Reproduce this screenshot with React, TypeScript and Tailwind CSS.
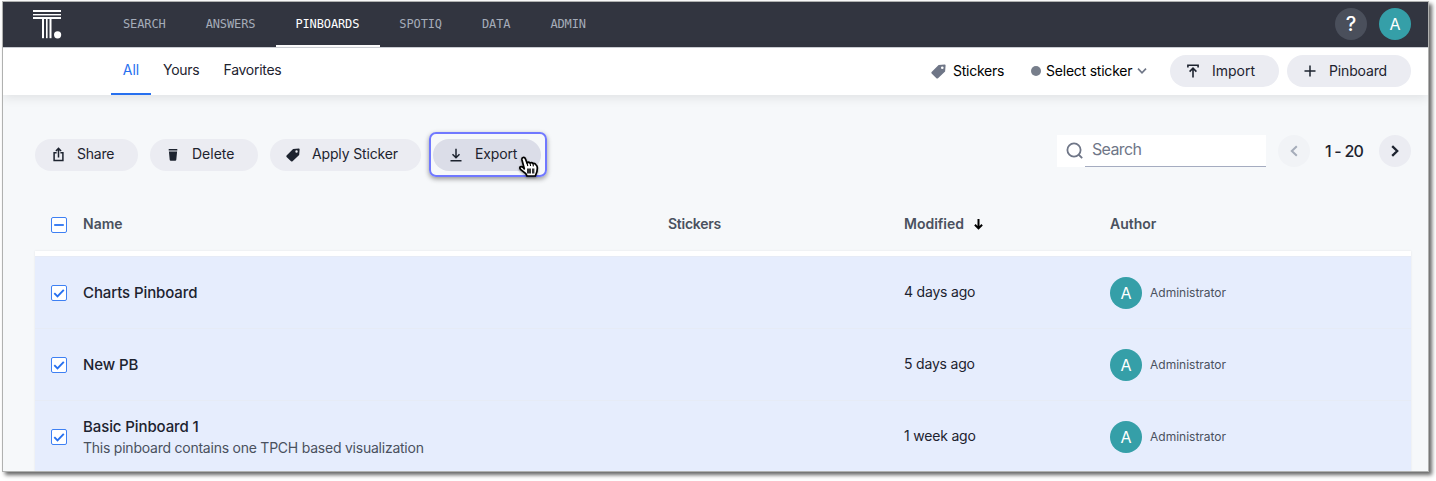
import React from "react";

type IconProps = { className?: string };

const Logo = () => (
  <svg width="29" height="30" viewBox="0 0 29 30" className="block" fill="#fff">
    <rect x="0" y="0" width="28" height="2" />
    <rect x="0" y="4" width="28" height="1.4" />
    <rect x="0" y="7" width="28" height="2" />
    <rect x="9" y="9" width="2" height="19.2" />
    <rect x="13" y="9" width="1.6" height="19.2" />
    <rect x="16.5" y="9" width="2" height="19.2" />
    <circle cx="24.6" cy="24.8" r="3.6" />
  </svg>
);

const TagIcon = ({ className }: IconProps) => (
  <svg width="15" height="15" viewBox="0 0 15 15" className={className} fill="currentColor">
    <path
      fillRule="evenodd"
      d="M7.6 1 L13.8 .6 Q14.6 .6 14.6 1.4 L14.1 7.4 L7 14.2 Q6.2 14.8 5.4 14.2 L.6 9.600 Q0 8.800 .6 8 Z M11.3 2.5 A1.3 1.3 0 1 0 11.3 5.1 A1.3 1.3 0 1 0 11.3 2.5 Z"
    />
  </svg>
);

const ShareIcon = () => (
  <svg width="11" height="15" viewBox="0 0 11 15" fill="none" stroke="currentColor" strokeWidth="1.5">
    <path d="M3.6 5.8H1.1v7.6h8.8V5.8H7.4M5.5 10.500V1.6M2.9 4 5.5 1.4l2.6 2.600" />
  </svg>
);

const TrashIcon = () => (
  <svg width="10" height="12" viewBox="0 0 10 12" fill="currentColor">
    <path d="M.7 0h8.6v1.6H.7zM.9 2.6h8.2l-.8 8.2q-.1.9-1 .9H2.700q-.9 0-1-.9z" />
  </svg>
);

const ExportIcon = () => (
  <svg width="12" height="14" viewBox="0 0 12 14" fill="none" stroke="currentColor" strokeWidth="1.5">
    <path d="M6 .8v9M2.5 6.300 6 9.800l3.500-3.500M.5 12.700h11" />
  </svg>
);

const ImportIcon = () => (
  <svg width="12" height="14" viewBox="0 0 12 14" fill="none" stroke="currentColor" strokeWidth="1.600">
    <path d="M.9 3.400V1.200h10.200v2.200M6 13.500V4.200M2.600 7.600 6 4.200l3.400 3.400" />
  </svg>
);

const PlusIcon = () => (
  <svg width="12" height="12" viewBox="0 0 12 12" fill="none" stroke="currentColor" strokeWidth="1.5">
    <path d="M6 .5v11M.5 6h11" />
  </svg>
);

const Chevron = ({ className }: IconProps) => (
  <svg width="8" height="12" viewBox="0 0 8 12" className={className} fill="none" stroke="currentColor">
    <path d="M1.200 1.200 6.200 6l-5 4.800" />
  </svg>
);

const HandCursor = () => (
  <svg width="21" height="22" viewBox="0 0 21 22" className="absolute left-[518px] top-[156px]" style={{ filter: "drop-shadow(0 1px 1px rgba(0,0,0,.4))" }}>
    <path
      d="M6.300 12.800 4 4Q3.600 1.900 5.100 1.500 6.800 1.100 7.500 3L9 7Q10.500 5.500 12 7 13.800 5.900 15 7.600 16.900 6.900 18 8.900 19.600 10 19.300 12.500L18.900 15.800 17.300 20H9L7.800 17.700 2.800 13.700Q1.200 11.900 2.300 10.800 3.500 10 5.100 11.500Z"
      fill="#fff"
      stroke="#000"
      strokeWidth="1.700"
      strokeLinejoin="round"
    />
    <path d="M9 7 9.800 10M12 7 12.600 10M15 7.600 15.400 10.300" stroke="#000" strokeWidth="1.100" />
    <path d="M9 12.500v5h4v-5zM14 12.500v5h2.400v-5z" fill="#333" />
  </svg>
);

const Checkbox = ({ partial }: { partial?: boolean }) => (
  <svg width="16" height="16" viewBox="0 0 16 16" className="block shrink-0" fill="none" stroke="#3e80f3">
    <rect x=".5" y=".5" width="15" height="15" rx="1.500" fill="#fff" strokeWidth="1" />
    {partial ? <path d="M3.200 8h9.600" strokeWidth="2" /> : <path d="m3.300 8.100 3.200 3.200 6.300-6.500" stroke="#2770ef" strokeWidth="1.900" />}
  </svg>
);

const Avatar = () => (
  <span className="flex size-8 shrink-0 items-center justify-center rounded-full bg-[#359fa8] text-[16px] leading-none text-white">
    A
  </span>
);

const Pill = ({ icon, label, className, labelClass }: { icon: React.ReactNode; label: string; className: string; labelClass: string }) => (
  <div className={`flex h-8 shrink-0 items-center rounded-full text-[#1d232f] ${className}`}>
    <span className="flex w-4 shrink-0 justify-center">{icon}</span>
    <span className={`ml-[11px] whitespace-nowrap text-sm leading-5 ${labelClass}`}>{label}</span>
  </div>
);

const NAV = ["SEARCH", "ANSWERS", "PINBOARDS", "SPOTIQ", "DATA", "ADMIN"];

const ROWS = [
  { name: "Charts Pinboard", modified: "4 days ago" },
  { name: "New PB", modified: "5 days ago" },
  { name: "Basic Pinboard 1", note: "This pinboard contains one TPCH based visualization", modified: "1 week ago" },
];

const COLS = "grid grid-cols-[48px_585px_236px_206px_1fr] items-center";

export default function App() {
  return (
    <div className="relative h-[481px] w-[1436px] overflow-hidden bg-white pl-[2px] pt-px font-['Inter',sans-serif] text-sm text-[#1d232f]">
      <div className="flex h-[471px] w-[1427px] flex-col overflow-hidden border border-[#b0b1b0] bg-[#f6f8fa] shadow-[3px_3px_4px_rgba(0,0,0,0.6)]">
        <header className="flex h-[45px] shrink-0 items-stretch bg-[#323540] pl-[30px] pr-[17px]">
          <div className="w-[71px] pt-2">
            <Logo />
          </div>
          <nav className="flex font-['DejaVu_Sans_Mono',monospace] text-[12px] tracking-[-0.12px]">
            {NAV.map((item) => (
              <div
                key={item}
                className={`flex items-center border-b-2 px-5 pb-px pt-px leading-none ${
                  item === "PINBOARDS" ? "border-white text-white" : "border-transparent text-[#a5acb9]"
                }`}
              >
                <span className="-ml-px mr-px">{item}</span>
              </div>
            ))}
          </nav>
          <div className="ml-auto flex items-center gap-3 pb-[2px]">
            <span className="flex size-8 items-center justify-center rounded-full bg-[#4a4f5b] text-[20px] font-medium leading-none text-white">?</span>
            <Avatar />
          </div>
        </header>

        <div className="z-10 flex h-12 shrink-0 items-center border-t border-[#c9ccd2] bg-white pl-[108px] pr-[17px] shadow-[0_3px_10px_rgba(0,0,0,0.09)]">
          <div className="flex h-full self-stretch text-[14px]">
            <div className="flex w-10 items-center justify-center border-b-2 border-[#2770ef] pb-px text-[#2770ef]">All</div>
            <div className="flex items-center pb-[3px] pl-3 tracking-[-0.25px]">Yours</div>
            <div className="flex items-center pb-[3px] pl-6 tracking-[-0.28px]">Favorites</div>
          </div>
          <div className="ml-auto flex items-center pb-px text-black">
            <TagIcon className="mt-px text-[#6f7687]" />
            <span className="-mt-px ml-[7px] w-[78px] tracking-[-0.25px]">Stickers</span>
            <span className="size-2.5 rounded-full bg-[#777e8b]" />
            <span className="-mt-px ml-[5px] w-[92px] whitespace-nowrap tracking-[-0.22px]">Select sticker</span>
            <Chevron className="mr-[24px] h-2.5 w-2 rotate-90 stroke-[2] text-[#6f7687]" />
            <Pill icon={<ImportIcon />} label="Import" className="mr-2 w-[109px] bg-[#ebecf2] pl-[15px]" labelClass="-mt-px" />
            <Pill icon={<PlusIcon />} label="Pinboard" className="w-[124px] bg-[#ebecf2] pl-[15px]" labelClass="-mt-px tracking-[-0.15px]" />
          </div>
        </div>

        <main className="flex min-h-0 flex-1 flex-col pl-8 pr-[17px]">
          <div className="flex shrink-0 items-start justify-between pt-[37px]">
            <div className="flex items-center gap-3">
              <Pill icon={<ShareIcon />} label="Share" className="w-[103px] bg-[#ebecf2] pl-[15px]" labelClass="-mt-0.5 tracking-[-0.2px]" />
              <Pill icon={<TrashIcon />} label="Delete" className="w-[108px] bg-[#ebecf2] pl-[15px]" labelClass="-mt-0.5" />
              <Pill icon={<TagIcon className="size-3.5" />} label="Apply Sticker" className="w-[151px] bg-[#ebecf2] pl-[15px]" labelClass="-mt-0.5 tracking-[-0.15px]" />
              <div className="-ml-1 flex h-[45px] w-[118px] items-center rounded-[7px] border-2 border-[#7078ff] pl-0.5 shadow-[0_2px_5px_rgba(0,0,0,0.4)]">
                <Pill icon={<ExportIcon />} label="Export" className="w-[108px] bg-[#dbdde8] pl-[15px]" labelClass="-mt-0.5 tracking-[-0.15px]" />
              </div>
            </div>
            <div className="mt-[3px] flex h-8 items-center">
              <div className="mr-3 flex h-8 w-[209px] bg-white">
                <svg width="18" height="18" viewBox="0 0 18 18" className="ml-[9px] mt-[7px] shrink-0" fill="none" stroke="#6f7687" strokeWidth="1.800">
                  <circle cx="8" cy="8" r="6.600" />
                  <path d="m12.500 12.500 3.700 3.700" />
                </svg>
                <div className="ml-px flex-1 border-b border-[#a5acc0] pl-[7px] pt-1 text-[16px] leading-[21px] tracking-[-0.65px] text-[#6f7687]">Search</div>
              </div>
              <span className="flex size-8 items-center justify-center rounded-full bg-[#f1f3f6]">
                <Chevron className="rotate-180 stroke-[2] text-[#a5acb9]" />
              </span>
              <span className="w-[69px] pr-px text-center text-[16px] font-medium tracking-[-0.8px]">1 - 20</span>
              <span className="flex size-8 items-center justify-center rounded-full bg-[#ebecf2]">
                <Chevron className="stroke-[2.300]" />
              </span>
            </div>
          </div>

          <div className={`${COLS} mt-[21px] h-[53px] shrink-0 pl-4 font-semibold text-[#4a515e]`}>
            <Checkbox partial />
            <span className="-ml-4 -mt-0.5">Name</span>
            <span className="-ml-4 -mt-0.5 tracking-[-0.25px]">Stickers</span>
            <span className="-ml-4 -mt-0.5 flex items-center gap-2.5">
              Modified
              <svg width="9" height="11" viewBox="0 0 9 11" className="mt-0.5" fill="none" stroke="#000" strokeWidth="2">
                <path d="M4.500 0v9M.9 5.800l3.600 3.600 3.600-3.600" />
              </svg>
            </span>
            <span className="-ml-4 -mt-0.5">Author</span>
          </div>

          <div className="shrink-0 border-t-[5px] border-white shadow-[0_0_2px_rgba(0,0,0,0.08)]">
            {ROWS.map((row) => (
              <div key={row.name} className={`${COLS} h-[72px] border-t border-[#e6ebf6] bg-[#e6edfd] pl-4`}>
                <Checkbox />
                <div className={row.note ? "-ml-4 mt-[3px]" : "-ml-4"}>
                  <div className="text-[15px] font-medium leading-5 tracking-[-0.1px]">{row.name}</div>
                  {row.note && <div className="text-sm leading-[22px] tracking-[-0.235px] text-[#4a515e]">{row.note}</div>}
                </div>
                <span />
                <span className="-ml-4 -mt-px tracking-[-0.2px]">{row.modified}</span>
                <span className="-ml-4 flex items-center gap-2 text-[12px] text-[#4a515e]">
                  <Avatar />
                  Administrator
                </span>
              </div>
            ))}
          </div>
        </main>
      </div>
      <HandCursor />
    </div>
  );
}
